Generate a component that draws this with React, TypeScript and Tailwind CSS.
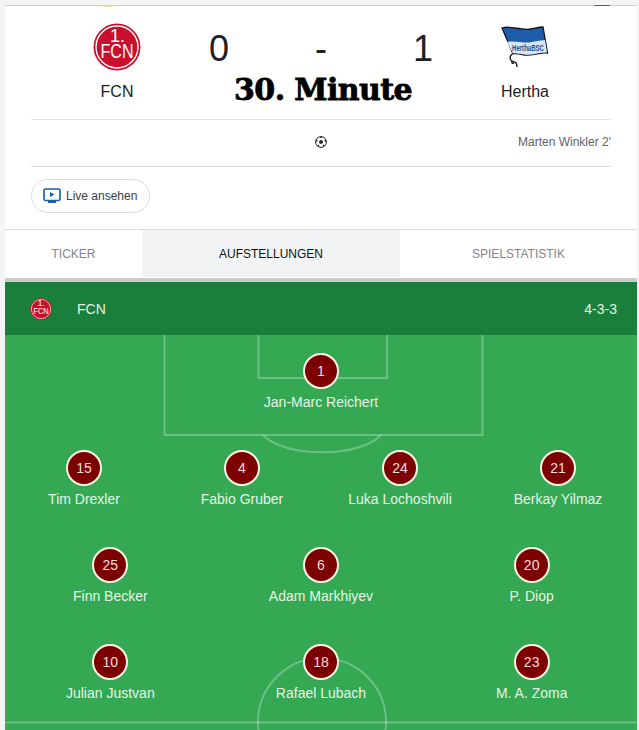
import React from "react";

const SANS = "font-['Liberation_Sans',Arial,sans-serif]";

const FcnLogo = ({ size }: { size: number }) => (
  <svg width={size} height={size} viewBox="0 0 48 48">
    <circle cx="24" cy="24" r="23.5" fill="#c8102e" />
    <circle cx="24" cy="24" r="21" fill="none" stroke="#fff" strokeWidth="1.4" />
    <text x="24.5" y="18.5" textAnchor="middle" fontSize="18" fill="#fff" fontFamily="Liberation Sans, sans-serif">
      1.
    </text>
    <text x="7.5" y="35" fontSize="20" textLength="33" lengthAdjust="spacingAndGlyphs" fill="#fff" fontFamily="Liberation Sans, sans-serif">
      FCN
    </text>
  </svg>
);

const HerthaLogo = () => (
  <svg width="48" height="48" viewBox="0 0 48 48">
    {/* flag */}
    <path d="M1 5 C10 2 20 8 30 6 C35 5 39 4 42 4 L46.5 30 C40 29 32 33 23 32 C18 31 14 30 12 31 Z" fill="#1d5ca8" stroke="#10151f" strokeWidth="1.3" />
    <path d="M6 19 C14 17 23 21 31 19 C36 18 41 17 44 17 L46 29.5 C40 29 32 32.5 23 31.5 C18 31 14 30 12 30.5 Z" fill="#d5e7f5" />
    <text x="11" y="27.5" fontSize="9.5" fontWeight="700" fill="#14508f" textLength="32" lengthAdjust="spacingAndGlyphs" fontFamily="Liberation Sans, sans-serif">
      HerthaBSC
    </text>
    {/* rope */}
    <path d="M11 31 C8 34 9 37 11 38 C14 39 16 39 16 44 M11 38 C10 40 12 41 13 40" fill="none" stroke="#10151f" strokeWidth="1.3" />
  </svg>
);

const BallIcon = () => (
  <svg width="12" height="12" viewBox="0 0 12 12">
    <circle cx="6" cy="6" r="5.4" fill="#fff" stroke="#202124" strokeWidth="1" />
    <path d="M6 3.8 8.1 5.4 7.3 7.8H4.7L3.9 5.4Z" fill="#202124" />
    <path d="M6 .8V2M1 4.5 2.4 5M11 4.5 9.6 5M3 10.2 3.8 9M9 10.2 8.2 9" stroke="#202124" strokeWidth="1.5" />
  </svg>
);

const TvIcon = () => (
  <svg width="18" height="16" viewBox="0 0 18 16">
    <rect x="1" y="1" width="16" height="11.5" rx="1.5" fill="#fff" stroke="#1a5fb4" strokeWidth="1.7" />
    <path d="M7 4v5l4.5-2.5Z" fill="#1a5fb4" />
    <rect x="5" y="13" width="8" height="2" fill="#1a5fb4" />
  </svg>
);

const Player = ({ num, name }: { num: number; name: string }) => (
  <div className="flex flex-col items-center">
    <div className="flex h-9 w-9 items-center justify-center rounded-full border-2 border-[#fdf6e8] bg-[#7c0000] text-sm text-[#f3dede]">
      {num}
    </div>
    <div className="mt-[3px] whitespace-nowrap text-sm leading-5 text-[#e6f5e6]">{name}</div>
  </div>
);

const rows = [
  { cols: "grid-cols-1", players: [{ num: 1, name: "Jan-Marc Reichert" }] },
  {
    cols: "grid-cols-4",
    players: [
      { num: 15, name: "Tim Drexler" },
      { num: 4, name: "Fabio Gruber" },
      { num: 24, name: "Luka Lochoshvili" },
      { num: 21, name: "Berkay Yilmaz" },
    ],
  },
  {
    cols: "grid-cols-3",
    players: [
      { num: 25, name: "Finn Becker" },
      { num: 6, name: "Adam Markhiyev" },
      { num: 20, name: "P. Diop" },
    ],
  },
  {
    cols: "grid-cols-3",
    players: [
      { num: 10, name: "Julian Justvan" },
      { num: 18, name: "Rafael Lubach" },
      { num: 23, name: "M. A. Zoma" },
    ],
  },
];

export default function App() {
  return (
    <div className={`h-[730px] w-[639px] overflow-hidden bg-[#f4f4f4] pl-[5px] pr-[2px] pt-[5px] ${SANS}`}>
      <div className="relative border-t border-[#cfcfcf] bg-white">
        {/* clipped bits of the row above */}
        <div className="absolute left-[98px] top-0 h-px w-[10px] bg-[#e8e2a0]" />
        <div className="absolute left-[589px] top-[-1px] h-px w-[16px] bg-[#2e7d4f]" />

        {/* Score */}
        <div className="mx-[26px] flex h-[114px] border-b border-[#e3e3e3] pt-[17px]">
          <div className="flex w-[172px] flex-col items-center">
            <FcnLogo size={48} />
            <span className="mt-[11px] text-base leading-5 text-[#202124]">FCN</span>
          </div>
          <div className="flex w-[236px] flex-col">
            <div className="flex justify-between px-[6px] text-4xl leading-[52px] text-[#202124]">
              <span>0</span>
              <span>-</span>
              <span>1</span>
            </div>
            <h1 className="mt-[-1px] whitespace-nowrap pl-[4px] text-center font-['DejaVu_Serif',serif] text-[30px] font-black leading-[32px] tracking-[-0.6px] text-black [-webkit-text-stroke:0.8px_black]">
              30. Minute
            </h1>
          </div>
          <div className="flex w-[172px] flex-col items-center">
            <HerthaLogo />
            <span className="mt-[11px] text-base leading-5 text-[#202124]">Hertha</span>
          </div>
        </div>

        {/* Goal */}
        <div className="relative mx-[26px] flex h-[47px] items-center justify-end border-b border-[#dcdcdc] pb-[2px]">
          <div className="absolute left-[284px] top-[16px]">
            <BallIcon />
          </div>
          <span className="text-xs text-[#5f6368]">Marten Winkler 2'</span>
        </div>

        {/* Live */}
        <div className="h-[62px] px-[26px] pt-[12px]">
          <button className="flex h-[34px] w-[119px] items-center gap-[5px] rounded-full border border-[#dadce0] pl-[11px] text-xs text-[#3c4043]">
            <TvIcon />
            Live ansehen
          </button>
        </div>

        {/* Tabs */}
        <div className="flex h-[49px] border-t border-[#dadce0] text-xs">
          <div className="flex h-[47px] w-[137px] items-center justify-center text-[#80868b]">TICKER</div>
          <div className="flex h-[47px] w-[258px] items-center justify-center bg-[#f1f3f4] text-[#111]">AUFSTELLUNGEN</div>
          <div className="flex h-[47px] flex-1 items-center justify-center text-[#80868b]">SPIELSTATISTIK</div>
        </div>
        <div className="h-[4px] bg-[#cccccc]" />

        {/* Team bar */}
        <div className="flex h-[53px] items-center justify-between bg-[#1a7f3c] pl-[25px] pr-[20px] text-sm text-[#e6f5e6]">
          <div className="flex items-center gap-[25px]">
            <FcnLogo size={22} />
            <span>FCN</span>
          </div>
          <span>4-3-3</span>
        </div>

        {/* Pitch */}
        <div className="relative h-[400px] bg-[#34a853]">
          <svg className="absolute inset-0" width="632" height="400" fill="none" stroke="#ffffff" strokeOpacity="0.28" strokeWidth="2">
            <path d="M159.5 0V100H477.5V0" />
            <path d="M253.5 0V43H382V0" />
            <path d="M258 100C279 123 355 123 376 100" />
            <path d="M0 387.5H632" />
            <circle cx="317" cy="387" r="64" />
          </svg>
          <div className="relative">
            {rows.map((row) => (
              <div key={row.players[0].num} className={`grid h-[97px] pt-[18px] ${row.cols}`}>
                {row.players.map((p) => (
                  <Player key={p.num} num={p.num} name={p.name} />
                ))}
              </div>
            ))}
          </div>
        </div>
      </div>
    </div>
  );
}
